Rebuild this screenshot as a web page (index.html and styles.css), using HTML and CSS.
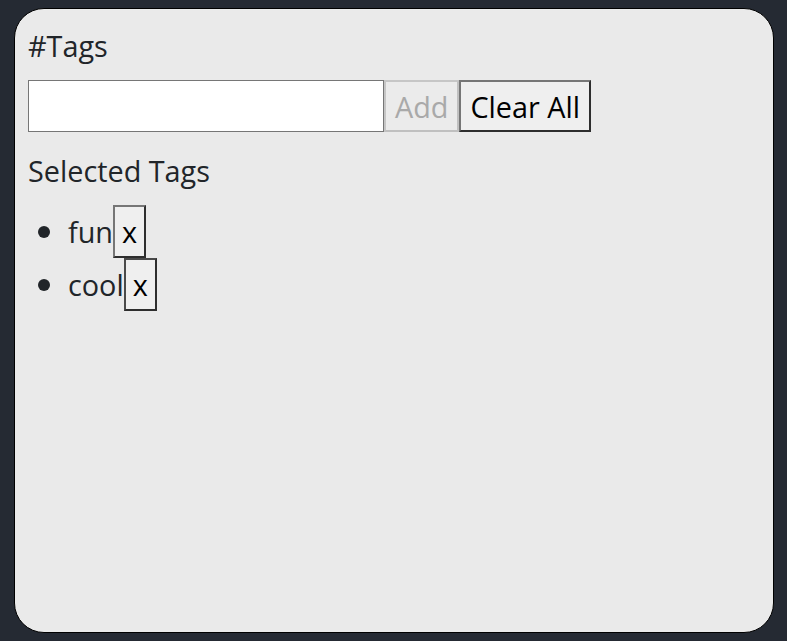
FILE: index.html
```html
<!DOCTYPE html>
<html>
<head>
<meta charset="utf-8">
<link rel="stylesheet" href="styles.css">
</head>
<body>
<div class="card">
  <div class="title">#Tags</div>
  <div class="row">
    <input class="field" type="text">
    <button class="btn btn-disabled" disabled>Add</button>
    <button class="btn">Clear All</button>
  </div>
  <div class="subtitle">Selected Tags</div>
  <ul class="tags">
    <li><span>fun</span><button class="btn x">x</button></li>
    <li><span>cool</span><button class="btn x x-dark">x</button></li>
  </ul>
</div>
</body>
</html>
```
FILE: styles.css
```css
html, body {
  margin: 0;
  padding: 0;
  background: #252a33;
  height: 100%;
}
body {
  padding: 8px 13px 8px 14px;
  box-sizing: border-box;
  font-family: "Open Sans", "Noto Sans", sans-serif;
}
.card {
  height: 625px;
  box-sizing: border-box;
  background: #eaeaea;
  border: 1px solid #000;
  border-radius: 30px;
  padding: 17px 13px;
  color: #212529;
  font-size: 28.8px;
}
.title {
  line-height: 40px;
  margin-bottom: 14px;
}
.row {
  display: flex;
  align-items: stretch;
  height: 52px;
}
.field {
  width: 356px;
  box-sizing: border-box;
  border: 1px solid #767676;
  background: #fff;
  margin: 0;
  font-size: 26px;
}
.btn {
  margin: 0;
  padding: 0 9px;
  font-family: "Open Sans", "Noto Sans", sans-serif;
  font-size: 28.8px;
  color: #000;
  background: #efefef;
  border: 2px solid;
  border-color: #767676 #2e2e2e #2e2e2e #767676;
  box-sizing: border-box;
  border-radius: 0;
}
.btn-disabled {
  color: #a9a9a9;
  border-color: #c6c6c6 #c0c0c0 #c0c0c0 #c6c6c6;
  background: #ebebeb;
}
.subtitle {
  margin-top: 19px;
  line-height: 40px;
}
.tags {
  margin: 13px 0 0;
  padding-left: 40px;
}
.tags li {
  height: 53px;
  line-height: 53px;
}
.tags li::marker {
  font-size: 33px;
}
.x {
  display: inline-block;
  height: 53px;
  line-height: 49px;
  padding: 0 7px;
  vertical-align: baseline;
}
.x-dark {
  border-color: #4a4a4a #2e2e2e #2e2e2e #4a4a4a;
}
```
